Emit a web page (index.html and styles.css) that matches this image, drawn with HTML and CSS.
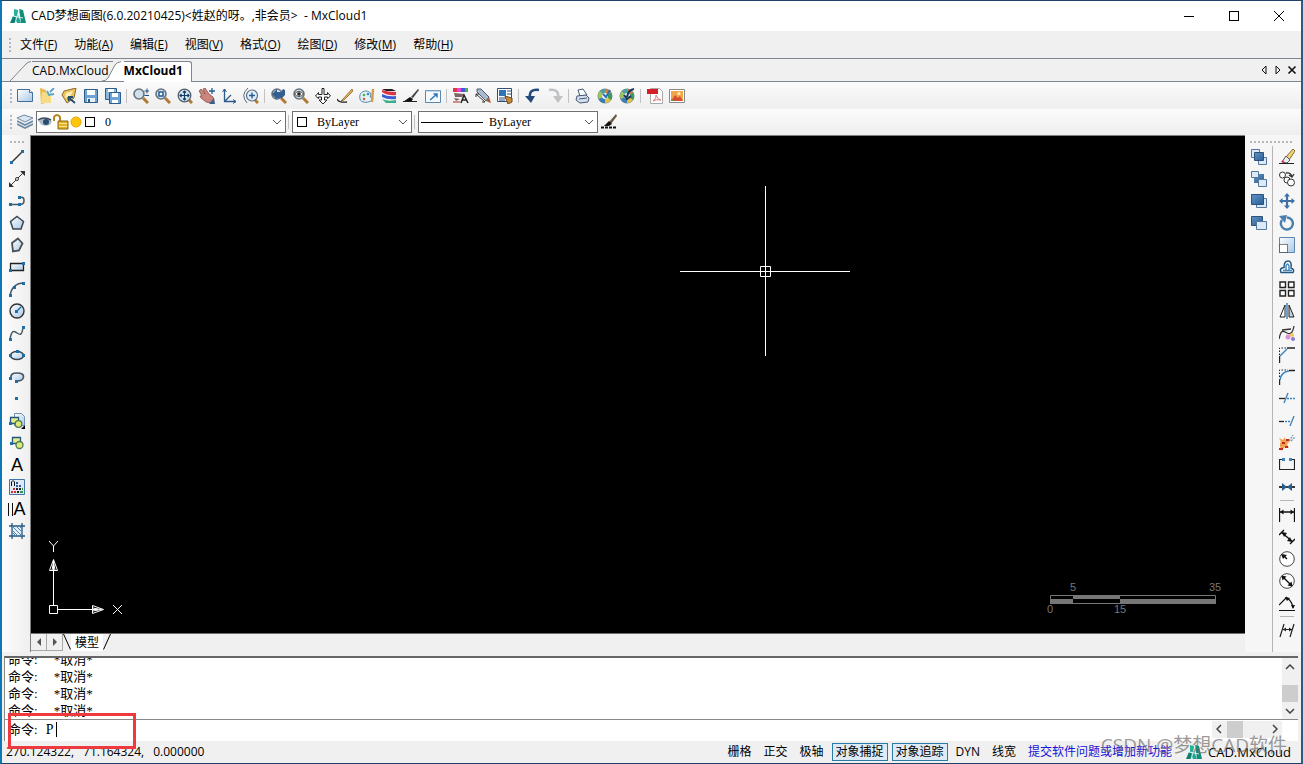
FILE: index.html
```html
<!DOCTYPE html>
<html lang="zh-CN">
<head>
  <meta charset="UTF-8">
  <title>MxCloud1</title>
  <link rel="stylesheet" href="styles.css">
</head>
<body>

<!-- shared icon parts -->
<svg class="defs" width="0" height="0">
  <defs>
    <linearGradient id="sky" x1="0" y1="0" x2="1" y2="1">
      <stop offset="0" stop-color="#ffffff"/>
      <stop offset="1" stop-color="#a9c8e6"/>
    </linearGradient>
    <linearGradient id="steel" x1="0" y1="0" x2="1" y2="1">
      <stop offset="0" stop-color="#5f93c4"/>
      <stop offset="1" stop-color="#2c5f95"/>
    </linearGradient>
    <symbol id="lens" viewBox="0 0 16 16">
      <path d="M10 10l5 5" stroke="#b07a35" stroke-width="3"/>
      <circle cx="6" cy="6" r="5" fill="#cfdfec" stroke="#69737c" stroke-width="1.6"/>
    </symbol>
    <symbol id="logo" viewBox="0 0 16 16">
      <path d="M4 1l4 1v5l-4 2z" fill="#25b39b"/>
      <path d="M9 1l4 1 3 13h-5z" fill="#0e8f7b"/>
      <path d="M3 8l5 2-3 5H0z" fill="#0b7f70"/>
      <path d="M7 4l4 11H7l-2-5z" fill="#1fa894"/>
      <path d="M5 15L9 2M3 8l10 2" stroke="#fff" stroke-width=".8"/>
    </symbol>
    <symbol id="chevron" viewBox="0 0 10 6">
      <path d="M1 1l4 4 4-4" fill="none" stroke="#555"/>
    </symbol>
    <symbol id="wheel" viewBox="0 0 16 16">
      <circle cx="8" cy="8" r="7.5" fill="#6c8794"/>
      <path d="M8 8V1a7 7 0 0 1 6 4z" fill="#d97c3c"/>
      <path d="M8 8l6-3a7 7 0 0 1 0 7z" fill="#3d9a58"/>
      <path d="M8 8l6 4a7 7 0 0 1-6 3z" fill="#e2c23f"/>
      <path d="M8 8v7a7 7 0 0 1-6-4z" fill="#3b7cb8"/>
      <path d="M8 8l-6 3a7 7 0 0 1 1-8z" fill="#9fc45a"/>
      <path d="M8 8L3 3a7 7 0 0 1 5-2z" fill="#4aa3a0"/>
      <circle cx="8" cy="8" r="3" fill="#f4f4f4"/>
    </symbol>
  </defs>
</svg>

<div class="window">

  <header class="titlebar">
    <svg class="icon" viewBox="0 0 16 16"><use href="#logo"/></svg>
    <h1 class="title">CAD梦想画图(6.0.20210425)&lt;姓赵的呀。,非会员&gt;&nbsp; - MxCloud1</h1>
    <div class="window-buttons">
      <button aria-label="最小化"><svg viewBox="0 0 12 12"><path d="M1 5.5h10"/></svg></button>
      <button aria-label="最大化"><svg viewBox="0 0 12 12"><rect x="1.5" y=".5" width="9" height="9"/></svg></button>
      <button aria-label="关闭"><svg viewBox="0 0 12 12"><path d="M1 0l10 10M11 0L1 10"/></svg></button>
    </div>
  </header>

  <nav class="menubar">
    <span class="grip"></span>
    <button>文件(<u>F</u>)</button>
    <button>功能(<u>A</u>)</button>
    <button>编辑(<u>E</u>)</button>
    <button>视图(<u>V</u>)</button>
    <button>格式(<u>O</u>)</button>
    <button>绘图(<u>D</u>)</button>
    <button>修改(<u>M</u>)</button>
    <button>帮助(<u>H</u>)</button>
  </nav>

  <div class="tabs">
    <button class="tab">
      <svg class="tab-slope" viewBox="0 0 22 20"><path d="M0 20L16 3Q18 .5 22 .5V20z"/></svg>
      <span class="tab-label">CAD.MxCloud</span>
    </button>
    <button class="tab active">
      <svg class="tab-slope" viewBox="0 0 22 20"><path d="M0 20Q4 20 6 17L13 4Q15 .5 22 .5V20z"/></svg>
      <span class="tab-label">MxCloud1</span>
    </button>
    <div class="tab-nav">
      <button aria-label="上一个"><svg viewBox="0 0 10 10"><path d="M7 1v8L3 5z"/></svg></button>
      <button aria-label="下一个"><svg viewBox="0 0 10 10"><path d="M3 1v8l4-4z"/></svg></button>
      <button aria-label="关闭标签"><svg viewBox="0 0 10 10"><path d="M1.5 1.5l7 7M8.5 1.5l-7 7" stroke-width="1.6"/></svg></button>
    </div>
  </div>

  <div class="toolbar">
    <span class="grip"></span>
    <button class="tool" aria-label="新建"><svg viewBox="0 0 16 16"><path d="M.5 1.5h12l3 3v9H.5z" fill="url(#sky)" stroke="#3f6f9c"/><path d="M12.5 1.5v3h3" fill="#fff" stroke="#3f6f9c"/></svg></button>
    <button class="tool" aria-label="打开"><svg viewBox="0 0 16 16"><path d="M1 0l6 2v13l-5 1z" fill="#e9b94c"/><path d="M3 4l9 1v10H2z" fill="#f7dc86"/><path d="M15 0l-4 4M8 3l2 4 5-1" stroke="#5ba3cf" stroke-width="1.8" fill="none"/></svg></button>
    <button class="tool" aria-label="打开云图"><svg viewBox="0 0 16 16"><path d="M3 3l12-3-2 10-7 5-5-8z" fill="#efc25a" stroke="#8a6a2b"/><path d="M5 5l7-2-3 6-5 1z" fill="#fff0b8"/><path d="M14 15L7 9M7 9l5 0M7 9l1 4" stroke="#24506f" stroke-width="1.8"/></svg></button>
    <button class="tool" aria-label="保存"><svg viewBox="0 0 16 16"><path d="M1.5 1.5h13v13h-13z" fill="#6fa3d2" stroke="#2d5d8c"/><path d="M4 2h8v5H4z" fill="#fff"/><path d="M4 10h8v4H4z" fill="#e8f0f8"/><path d="M5 11h2v3H5z" fill="#2d5d8c"/></svg></button>
    <button class="tool" aria-label="另存为"><svg viewBox="0 0 16 16"><path d="M.5.5h11v11H.5z" fill="#8db6dc" stroke="#2d5d8c"/><path d="M3 1h6v3H3z" fill="#fff"/><path d="M4.5 4.5h11v11h-11z" fill="#6fa3d2" stroke="#2d5d8c"/><path d="M7 5h6v4H7zM7 12h6v3H7z" fill="#fff"/></svg></button>
    <span class="sep"></span>
    <button class="tool" aria-label="实时缩放"><svg viewBox="0 0 16 16"><use href="#lens"/><path d="M11.500 3h5M14 .5v5M11.500 7.500h5" stroke="#1e4c7c"/></svg></button>
    <button class="tool" aria-label="窗口缩放"><svg viewBox="0 0 16 16"><use href="#lens"/><path d="M4 4h4v4H4z" fill="#fff" stroke="#225c96" stroke-width="1.5"/></svg></button>
    <button class="tool" aria-label="范围缩放"><svg viewBox="0 0 16 16"><path d="M11 11l4 4" stroke="#b07a35" stroke-width="3"/><circle cx="7.5" cy="7.5" r="6.3" fill="#d5e5f3" stroke="#555f69" stroke-width="1.3"/><path d="M7.5 3v9M3 7.5h9M6 4.5L7.500 3 9 4.500M6 10.500l1.500 1.500L9 10.500M4.500 6L3 7.500 4.500 9M10.500 6L12 7.500 10.500 9" stroke="#123e68" fill="none" stroke-width="1.2"/></svg></button>
    <button class="tool" aria-label="平移"><svg viewBox="0 0 16 16"><path d="M0 3l2-2 4 5-2-5 2-1 4 6 4 3 1 3-3 3-5-1-5-4-1-2 2 0z" fill="#c9857b" stroke="#8d5149" stroke-width=".8"/><path d="M10 16l5-6 1 6z" fill="#3b608c"/><path d="M13 0v6M10 3h6" stroke="#225c96" stroke-width="1.3"/></svg></button>
    <button class="tool" aria-label="坐标系"><svg viewBox="0 0 16 16"><path d="M3.5 1v12.500H15M3.500 13.500L10 7" stroke="#2d5d8c" stroke-width="1.3" fill="none"/><path d="M1.500 4l2-3 2 3M12 11.500l3 2-3 2" stroke="#2d5d8c" fill="none"/></svg></button>
    <button class="tool" aria-label="中心缩放"><svg viewBox="0 0 16 16"><path d="M12 12l3 3" stroke="#b07a35" stroke-width="3"/><circle cx="9" cy="7.500" r="5.500" fill="#e2eefa" stroke="#5a6d80" stroke-width="1.2"/><path d="M5 0Q-3 7 4 15" stroke="#5a6d80" fill="none"/><path d="M9 4.500v6M6 7.500h6" stroke="#225c96" stroke-width="1.4"/></svg></button>
    <span class="sep"></span>
    <button class="tool" aria-label="上一视图"><svg viewBox="0 0 16 16"><use href="#lens"/><path d="M1 6l5-5v3h4l2-3 2 1v5l-3 3H6v2z" fill="#345f91"/></svg></button>
    <button class="tool" aria-label="查看"><svg viewBox="0 0 16 16"><use href="#lens"/><path d="M1.500 6Q6 1 10.500 6 6 11 1.500 6z" fill="#fff" stroke="#444"/><circle cx="6" cy="6" r="1.8" fill="#222"/></svg></button>
    <button class="tool" aria-label="移动视图"><svg viewBox="0 0 16 16"><path d="M7 .5h2v6h3.500v-2l3 3.500-3 2.500V9H9.500v3H12l-4 4-4-4h2.500V9H3.500v1.500L.5 8l3-3.500v2H7z" fill="#fff" stroke="#222"/></svg></button>
    <button class="tool" aria-label="画笔"><svg viewBox="0 0 16 16"><path d="M15 1L6 11l-2 2 3-1 9-9z" fill="#e6b25a" stroke="#8b5e23" stroke-width=".8"/><path d="M0 11q2 4 10 3" stroke="#222" fill="none" stroke-width="1.3"/></svg></button>
    <button class="tool" aria-label="颜色"><svg viewBox="0 0 16 16"><path d="M7 3C2 3 0 7 1 11s7 4 11 2c3-2 2-4-1-4 2-3 0-6-4-6z" fill="#e4f0f8" stroke="#5188a8"/><circle cx="5" cy="7" r="1.3" fill="#4ab04a"/><circle cx="9" cy="6" r="1.3" fill="#3c80c8"/><circle cx="5" cy="11" r="1.3" fill="#d2643c"/><path d="M14 1l-1 13" stroke="#d79a45" stroke-width="2.4"/></svg></button>
    <button class="tool" aria-label="图层颜色"><svg viewBox="0 0 16 16"><path d="M1 1h10l4 2H5z" fill="#222"/><path d="M1 2q6 2 14 2v3Q7 8 1 4z" fill="#db3545"/><path d="M1 6q6 3 14 2v3Q7 12 1 9z" fill="#3a5fd0"/><path d="M1 11q6 3 14 1v3H5z" fill="#36b18e"/></svg></button>
    <button class="tool" aria-label="格式刷"><svg viewBox="0 0 16 16"><path d="M15 1L8 9l2 1 6-8z" fill="#444"/><path d="M7 9l3 2-2 3H0z" fill="#111"/><path d="M0 13.500h14" stroke="#222"/></svg></button>
    <button class="tool" aria-label="全屏"><svg viewBox="0 0 16 16"><path d="M.5 2.500h15v12H.5z" fill="#f6fafd" stroke="#5b87ad"/><path d="M.5 2.500h15v1H.5z" fill="#8fb4d3"/><path d="M5 12l7-6M8.500 6H12v3.500" stroke="#2a78b8" stroke-width="1.5" fill="none"/></svg></button>
    <span class="sep"></span>
    <button class="tool" aria-label="文字样式"><svg viewBox="0 0 16 16"><path d="M0 0h4v4H0z" fill="#e0364c"/><path d="M4 0h4v4H4z" fill="#e248d3"/><path d="M8 0h4v4H8z" fill="#4656dc"/><path d="M12 0h3v4h-3z" fill="#45b457"/><path d="M1 5l10 1-2 3-7 0zM1 10l6 1-4 2z" fill="#7b6464"/><path d="M0 14h7" stroke="#c66" stroke-width="1.5"/><path d="M8 15l3-8 4 8M9.500 12h4" stroke="#222" fill="none" stroke-width="1.5"/></svg></button>
    <button class="tool" aria-label="标注样式"><svg viewBox="0 0 16 16"><path d="M2 1l4 0 8 8-3 4-9-9z" fill="#a9bccf" stroke="#4a5b6c"/><path d="M1 6l9 8M1 6v3M1 6h3M10 14H7" stroke="#333" fill="none"/><path d="M11 13l3-4 2 6z" fill="#a85a3a"/></svg></button>
    <button class="tool" aria-label="属性"><svg viewBox="0 0 16 16"><path d="M.5.5h14v13H.500z" fill="#fff" stroke="#2d4f78"/><path d="M2 2h7v6H2z" fill="#2f74b5"/><path d="M10 3h4M10 6h4M2 10h7M2 12h6" stroke="#2d4f78"/><path d="M8 8l7 2v4l-4 2z" fill="#c68a3a" stroke="#6d4a1a"/></svg></button>
    <span class="sep"></span>
    <button class="tool" aria-label="撤销"><svg viewBox="0 0 16 16"><path d="M14 2C7 1 4 4 5 9" stroke="#24497c" stroke-width="2.6" fill="none"/><path d="M0 8h10l-4 7z" fill="#24497c"/></svg></button>
    <button class="tool" aria-label="重做"><svg viewBox="0 0 16 16"><path d="M2 2c7-1 10 2 9 7" stroke="#bfc3c6" stroke-width="2.6" fill="none"/><path d="M16 8H6l5 7z" fill="#bfc3c6"/></svg></button>
    <span class="sep"></span>
    <button class="tool" aria-label="打印"><svg viewBox="0 0 16 16"><path d="M3 2l5-1 4 6-7 1z" fill="#fff" stroke="#46597a"/><path d="M2 8l9-1 3 3-1 4-8 1-4-3z" fill="#d5deeb" stroke="#46597a"/><path d="M4 11l8-1" stroke="#46597a"/></svg></button>
    <button class="tool" aria-label="云图上传"><svg viewBox="0 0 16 16"><use href="#wheel"/><path d="M6 6l3 3 4-7" stroke="#2f72b4" stroke-width="2" fill="none"/></svg></button>
    <button class="tool" aria-label="云图下载"><svg viewBox="0 0 16 16"><use href="#wheel"/><path d="M15 1Q9 2 8 9M5 7l3 4 4-3" stroke="#17375e" stroke-width="2" fill="none"/></svg></button>
    <span class="sep"></span>
    <button class="tool" aria-label="输出PDF"><svg viewBox="0 0 16 16"><path d="M3.500.5h9l3 3v12h-12z" fill="#fff" stroke="#aaa"/><path d="M0 1h11v5H0z" fill="#d51f26"/><path d="M6 13q4-3 3-6 1 4 5 5-5-1-8 1z" stroke="#d98080" fill="none"/></svg></button>
    <button class="tool" aria-label="输出图片"><svg viewBox="0 0 16 16"><path d="M.5 1.500h15v13H.5z" fill="#fff" stroke="#888"/><path d="M2 3h12v10H2z" fill="#f3a54a"/><path d="M2 13l4-6 3 3 2-2 3 5z" fill="#d4502f"/><circle cx="10" cy="5.500" r="1.5" fill="#fff3b0"/><path d="M2 11l3 2H2z" fill="#4b9b4b"/></svg></button>
  </div>

  <div class="toolbar toolbar-props">
    <span class="grip"></span>
    <button class="tool" aria-label="图层"><svg viewBox="0 0 16 16"><path d="M0 4l7-3 9 3-8 4z" fill="#dce6ee" stroke="#6c8ba5"/><path d="M0 7l8 4 8-4M0 10l8 4 8-4" fill="none" stroke="#6c8ba5" stroke-width="1.8"/></svg></button>
    <div class="combo combo-layer">
      <svg viewBox="0 0 16 16"><path d="M1 6q6-4 14 1l-2 4Q5 13 3 9z" fill="#a9bccb"/><path d="M1 6q6-4 13 0" stroke="#3a4b5b" stroke-width="1.5" fill="none"/><circle cx="9" cy="8" r="3" fill="#2b4a6c"/></svg>
      <svg viewBox="0 0 16 16"><path d="M1 7V3q3-4 6 0v4" stroke="#b48a1e" stroke-width="2" fill="none"/><path d="M5 7h10v8H5z" fill="#e3b128" stroke="#8a6812"/><path d="M6 9.500h8M6 12.500h8" stroke="#fbe38a"/></svg>
      <svg viewBox="0 0 16 16"><circle cx="7" cy="8" r="5" fill="#ffc60b" stroke="#eda200"/></svg>
      <i class="swatch"></i>
      <select aria-label="图层"><option>0</option></select>
      <svg class="chevron"><use href="#chevron"/></svg>
    </div>
    <span class="sep"></span>
    <div class="combo combo-color">
      <i class="swatch"></i>
      <select aria-label="颜色"><option>ByLayer</option></select>
      <svg class="chevron"><use href="#chevron"/></svg>
    </div>
    <span class="sep"></span>
    <div class="combo combo-line">
      <i class="line-sample"></i>
      <select aria-label="线型"><option>ByLayer</option></select>
      <svg class="chevron"><use href="#chevron"/></svg>
    </div>
    <button class="tool" aria-label="线型设置"><svg viewBox="0 0 16 16"><path d="M15 0L8 8l2 2 6-8z" fill="#6b5a41"/><path d="M8 7l3 3-3 2-5 0z" fill="#111"/><path d="M0 13.500h16" stroke="#111" stroke-width="2" stroke-dasharray="3 1"/></svg></button>
  </div>

  <main class="workspace">
    <aside class="draw-tools">
      <span class="grip grip-h"></span>
      <button class="tool" aria-label="直线"><svg viewBox="0 0 16 16"><path d="M2 14L14 2" stroke="#333" stroke-width="1.4"/><path d="M1 12h3v3H1zM12 1h3v3h-3z" fill="#1f6ea5"/></svg></button>
      <button class="tool" aria-label="构造线"><svg viewBox="0 0 16 16"><path d="M2 14L14 2" stroke="#333"/><path d="M0 11v5h5zM11 0h5v5z" fill="#333"/><circle cx="8" cy="8" r="1.5" fill="#fff" stroke="#333"/></svg></button>
      <button class="tool" aria-label="多段线"><svg viewBox="0 0 16 16"><path d="M1 11.500h10M11 4.500q4-1 4 3t-4 4" stroke="#4a5966" stroke-width="1.6" fill="none"/><path d="M0 10h3v3H0zM9 10h3v3H9zM9 3h3v3H9z" fill="#1f6ea5"/></svg></button>
      <button class="tool" aria-label="正多边形"><svg viewBox="0 0 16 16"><path d="M8 1.500l6.500 5L12 14H4L1.500 6.500z" fill="url(#sky)" stroke="#3c4650" stroke-width="1.5"/></svg></button>
      <button class="tool" aria-label="多边形"><svg viewBox="0 0 16 16"><path d="M9 1.500l4.500 5L10 13.500 4 14.500 3 6z" fill="url(#sky)" stroke="#4b5056" stroke-width="1.8"/></svg></button>
      <button class="tool" aria-label="矩形"><svg viewBox="0 0 16 16"><path d="M1.500 4.500h13v7h-13z" fill="url(#sky)" stroke="#222" stroke-width="1.3"/><path d="M0 10h3v3H0zM13 3h3v3h-3z" fill="#1f6ea5"/></svg></button>
      <button class="tool" aria-label="圆弧"><svg viewBox="0 0 16 16"><path d="M1 15Q3 2 15 2" stroke="#4a5966" stroke-width="1.6" fill="none"/><path d="M0 13h3v3H0zM4 5h3v3H4zM13 1h3v3h-3z" fill="#1f6ea5"/></svg></button>
      <button class="tool" aria-label="圆"><svg viewBox="0 0 16 16"><circle cx="8" cy="8" r="7" fill="url(#sky)" stroke="#333" stroke-width="1.4"/><path d="M8 8l4-4" stroke="#1f6ea5" stroke-width="1.5"/><path d="M6 7h3v3H6z" fill="#1f6ea5"/></svg></button>
      <button class="tool" aria-label="样条曲线"><svg viewBox="0 0 16 16"><path d="M1 14C3 4 5 6 8 8s5 3 6-6" stroke="#4a5966" stroke-width="1.5" fill="none"/><path d="M0 13h3v3H0zM13 1h3v3h-3z" fill="#1f6ea5"/></svg></button>
      <button class="tool" aria-label="椭圆"><svg viewBox="0 0 16 16"><ellipse cx="8" cy="8.500" rx="6.500" ry="4" fill="url(#sky)" stroke="#3c4650" stroke-width="1.5"/><path d="M0 7h3v3H0zM13 7h3v3h-3zM7 3h3v3H7z" fill="#1f6ea5"/></svg></button>
      <button class="tool" aria-label="椭圆弧"><svg viewBox="0 0 16 16"><path d="M2 9Q1 4 8 4t6.500 4T8 12" fill="url(#sky)" stroke="#4b5763" stroke-width="1.7"/><path d="M0 8h3v3H0zM6 11h3v3H6z" fill="#1f6ea5"/></svg></button>
      <button class="tool" aria-label="点"><svg viewBox="0 0 16 16"><path d="M6 6h3v3H6z" fill="#1f6ea5"/></svg></button>
      <button class="tool" aria-label="插入块"><svg viewBox="0 0 16 16"><path d="M5.500.5h7l3 3v9h-10z" fill="url(#sky)" stroke="#6f93b5"/><path d="M1.500 4.500h8v6h-8z" fill="#e5ee8a" stroke="#24577f" stroke-width="1.3"/><circle cx="9.500" cy="11" r="3.300" fill="#dfe878" stroke="#4a7a52" stroke-width="1.3"/><path d="M0 9h3v3H0z" fill="#1f6ea5"/><path d="M16 12v4h-4z" fill="#000"/></svg></button>
      <button class="tool" aria-label="创建块"><svg viewBox="0 0 16 16"><path d="M3.500 2.500h8v6h-8z" fill="#e5ee8a" stroke="#24577f" stroke-width="1.3"/><circle cx="10.500" cy="10" r="3.500" fill="#dfe878" stroke="#4a7a52" stroke-width="1.3"/><path d="M1 7h3v3H1z" fill="#1f6ea5"/></svg></button>
      <button class="tool tool-letter" aria-label="文字">A</button>
      <button class="tool" aria-label="图案"><svg viewBox="0 0 16 16"><path d="M.5.5h15v15H.5z" fill="#dfeaf6" stroke="#4676a8"/><path d="M2.500 7V3q1.500-3 3 0v4" stroke="#111" fill="none"/><path d="M7 3h2v2H7zM7 6h2v2H7zM10 6h2v2h-2z" fill="#2d58b0"/><path d="M4 9h2v2H4zM2 12h2v2H2zM5 12h2v2H5z" fill="#d22f3d"/><path d="M7 9h2v2H7zM10 9h2v2h-2zM8 12h2v2H8z" fill="#222"/><path d="M11 12h3v2h-3zM13 9h1v2h-1z" fill="#2f9d48"/></svg></button>
      <button class="tool tool-letter tool-mtext" aria-label="多行文字">A</button>
      <button class="tool" aria-label="填充"><svg viewBox="0 0 16 16"><path d="M3 3h10v10H3z" fill="#e3eff9"/><path d="M3 0v16M13 0v16M0 3h16M0 13h16" stroke="#24577f" stroke-width="1.3"/><path d="M3 7l6 6M3 3l10 10M7 3l6 6M4 10l3 3M10 3l3 3" stroke="#4e83b2"/></svg></button>
    </aside>

    <section class="view">
      <div class="canvas">
        <svg class="crosshair" viewBox="0 0 170 170"><path d="M85.500 0v170M0 85.500h170M80.500 80.500h10v10h-10z"/></svg>
        <svg class="ucs" viewBox="0 0 80 80"><path d="M10.500 69V24M15 73.500h40M6.500 69.500h8v8h-8zM6.500 34.500h8l-4-11zM9 34.500l1.500-9 1.500 9M49.500 69.500v8l11-4zM49.500 72l9 1.500-9 1.500M6 5l4.500 5L15 5M10.500 10v6M70 69l9 9M79 69l-9 9"/></svg>
        <svg class="scale" viewBox="0 0 180 40">
          <path d="M8.500 16.500h165v8h-165z" fill="none" stroke="#777"/>
          <path d="M8 20h23v5H8zM31 16h47v4H31zM78 20h96v5H78z" fill="#777"/>
          <text x="31" y="12">5</text>
          <text x="173" y="12">35</text>
          <text x="8" y="34">0</text>
          <text x="78" y="34">15</text>
        </svg>
      </div>
      <div class="layouts">
        <button class="layout-arrow" aria-label="向左"><svg viewBox="0 0 8 8"><path d="M6 0v8L2 4z"/></svg></button>
        <button class="layout-arrow" aria-label="向右"><svg viewBox="0 0 8 8"><path d="M2 0v8l4-4z"/></svg></button>
        <button class="layout-tab">
          <svg viewBox="0 0 8 16"><path d="M.5 0l7 15.500"/></svg>
          <span>模型</span>
          <svg viewBox="0 0 8 16"><path d="M7.500 0l-7 15.500"/></svg>
        </button>
      </div>
    </section>

    <aside class="side-tools">
      <span class="grip grip-h"></span>
      <div class="side-columns">
        <div class="order-tools">
          <button class="tool" aria-label="前置"><svg viewBox="0 0 16 16"><path d="M.5.5h8v8h-8zM7.500 8.500h8v7h-8z" fill="#dce9f6" stroke="#54789c"/><path d="M3.500 3.500h9v8h-9z" fill="url(#steel)" stroke="#2b527a"/></svg></button>
          <button class="tool" aria-label="后置"><svg viewBox="0 0 16 16"><path d="M3 3h10v9H3z" fill="url(#steel)"/><path d="M.5.5h7v6h-7zM7.500 8.500h8v7h-8z" fill="#dce9f6" stroke="#54789c"/></svg></button>
          <button class="tool" aria-label="置于对象之上"><svg viewBox="0 0 16 16"><path d="M5.500 5.500h10v9h-10z" fill="#dce9f6" stroke="#54789c"/><path d="M.5 1.500h12v10H.5z" fill="url(#steel)" stroke="#2b527a"/></svg></button>
          <button class="tool" aria-label="置于对象之下"><svg viewBox="0 0 16 16"><path d="M.5 1.500h11v9H.5z" fill="url(#steel)" stroke="#2b527a"/><path d="M5.500 6.500h10v8h-10z" fill="#dce9f6" stroke="#54789c"/></svg></button>
        </div>
        <div class="modify-tools">
          <button class="tool" aria-label="删除"><svg viewBox="0 0 16 16"><path d="M14 0L7 8l3 3 6-9z" fill="#efd27a" stroke="#8a6828"/><path d="M7 7l4 4-3 3-5-1z" fill="#f0eef2" stroke="#555"/><path d="M2 13l2-2 2 3z" fill="#d36"/><path d="M0 14.500h15" stroke="#222"/></svg></button>
          <button class="tool" aria-label="复制"><svg viewBox="0 0 16 16"><circle cx="3.500" cy="4" r="3" fill="#fff" stroke="#333"/><circle cx="8" cy="9" r="3" fill="#fff" stroke="#333"/><circle cx="12" cy="11.500" r="3.500" fill="#fff" stroke="#333"/><path d="M7 2q5-1 6 4M10 4l3 2 2-3" stroke="#333" stroke-width="1.3" fill="none"/></svg></button>
          <button class="tool" aria-label="移动"><svg viewBox="0 0 16 16"><path d="M8 1v14M1 8h14" stroke="#3f73a6" stroke-width="2.2"/><path d="M8 0l3 3.500H5zM8 16l3-3.500H5zM0 8l3.500-3v6zM16 8l-3.500-3v6z" fill="#3f73a6"/></svg></button>
          <button class="tool" aria-label="旋转"><svg viewBox="0 0 16 16"><path d="M8 2.500A6 6 0 1 1 3 5" stroke="#4a7ead" stroke-width="2.4" fill="none"/><path d="M0 1l8-1-2 8z" fill="#4a7ead"/></svg></button>
          <button class="tool" aria-label="缩放"><svg viewBox="0 0 16 16"><path d="M.5.5h15v15H.5z" fill="url(#sky)" stroke="#5e87ae"/><path d="M.5 7.500h8v8h-8z" fill="#fff" stroke="#111" stroke-dasharray="1 1"/></svg></button>
          <button class="tool" aria-label="偏移"><svg viewBox="0 0 16 16"><path d="M2 13.500h12q2-3-2-4.500Q13 2 9 2T5 8.500Q0 9 2 13.500z" fill="#fff" stroke="#24577f" stroke-width="1.5"/><path d="M4 11.500h9M7 11V7q2-4 3 0v4" stroke="#3f86c0" stroke-width="1.4" fill="none"/></svg></button>
          <button class="tool" aria-label="阵列"><svg viewBox="0 0 16 16"><path d="M1 1h5.500v5.500H1zM9.500 1H15v5.500H9.500zM1 9.500h5.500V15H1zM9.500 9.500H15V15H9.500z" fill="#fff" stroke="#222" stroke-width="1.4"/></svg></button>
          <button class="tool" aria-label="镜像"><svg viewBox="0 0 16 16"><path d="M6 2v12H1z" fill="#fff" stroke="#222"/><path d="M10 2v12h5z" fill="#bcd3e8" stroke="#222"/><path d="M8 0v16" stroke="#3a7db5" stroke-width="1.4"/></svg></button>
          <button class="tool" aria-label="编辑样条"><svg viewBox="0 0 16 16"><path d="M0 14C2 4 4 6 8 8s6-1 7-7M3 5l9-1" stroke="#333" stroke-width="1.3" fill="none"/><circle cx="9" cy="12" r="2.500" fill="#d98fe0"/><circle cx="13" cy="10" r="2" fill="#f2c453"/><circle cx="14" cy="14" r="2" fill="#8a78d8"/></svg></button>
          <button class="tool" aria-label="倒角"><svg viewBox="0 0 16 16"><path d="M.5 16V9M8 1h8" stroke="#222" stroke-width="1.4"/><path d="M1 9l7-7" stroke="#3a86c4" stroke-width="1.5"/><path d="M.5 8V1H8" stroke="#222" stroke-dasharray="1.500 1.500" fill="none"/></svg></button>
          <button class="tool" aria-label="圆角"><svg viewBox="0 0 16 16"><path d="M.5 16v-6M10 1.500h6" stroke="#222" stroke-width="1.4"/><path d="M1 11Q2 3 10 2" stroke="#3a86c4" stroke-width="1.7" fill="none"/><path d="M.5 8V1H9" stroke="#222" stroke-dasharray="1.500 1.500" fill="none"/></svg></button>
          <button class="tool" aria-label="修剪"><svg viewBox="0 0 16 16"><path d="M0 7.500h6" stroke="#222" stroke-width="1.3"/><path d="M8 7.500h8" stroke="#3a86c4" stroke-width="1.3" stroke-dasharray="2 1"/><path d="M9 2L5 12" stroke="#3f7fb5" stroke-width="1.3"/></svg></button>
          <button class="tool" aria-label="延伸"><svg viewBox="0 0 16 16"><path d="M0 8.500h5" stroke="#222" stroke-width="1.3"/><path d="M6 8.500h6" stroke="#3a86c4" stroke-width="1.3" stroke-dasharray="2 1"/><path d="M15 3l-4 10" stroke="#3f7fb5" stroke-width="1.3"/></svg></button>
          <button class="tool" aria-label="分解"><svg viewBox="0 0 16 16"><path d="M0 3l4 2 2-3 1 4 4 0-3 3 2 4-4-1-4 4-1-5 0-3 1-1z" fill="#f0a24c"/><path d="M0 14h4M7 5h3M3 8h3M6 12h3" stroke="#c02a1c" stroke-width="2.2"/><path d="M10 6l4-6M12 6l4-4" stroke="#6c95bb" stroke-width="1.3" stroke-dasharray="2 1"/></svg></button>
          <button class="tool" aria-label="打断"><svg viewBox="0 0 16 16"><path d="M4 2.500H.5v10h15v-10H12" stroke="#222" fill="none" stroke-width="1.2"/><path d="M3 1h3v3H3zM10 1h3v3h-3z" fill="#3a86c4"/></svg></button>
          <button class="tool" aria-label="合并"><svg viewBox="0 0 16 16"><path d="M0 8h16" stroke="#222" stroke-width="1.8"/><path d="M3 4l5 4-5 4zM13 4L8 8l5 4z" fill="#2d5f8c"/></svg></button>
          <span class="sep-h"></span>
          <button class="tool" aria-label="线性标注"><svg viewBox="0 0 16 16"><path d="M.5 1v14M15.500 1v14M1 5h14" stroke="#111" stroke-width="1.3"/><path d="M1 5l3.500-2.500v5zM15 5l-3.500-2.500v5z" fill="#111"/></svg></button>
          <button class="tool" aria-label="对齐标注"><svg viewBox="0 0 16 16"><path d="M0 6l5-5M11 15l5-5M3 4l10 8" stroke="#111" stroke-width="1.4"/><path d="M3 3l5 1-3 4zM13 13l-5-1 3-4z" fill="#111"/></svg></button>
          <button class="tool" aria-label="半径标注"><svg viewBox="0 0 16 16"><circle cx="8" cy="8" r="7.300" fill="#fff" stroke="#444"/><path d="M8 8L4 4" stroke="#111" stroke-width="1.4"/><path d="M2 3l6 1-4 4z" fill="#111"/></svg></button>
          <button class="tool" aria-label="直径标注"><svg viewBox="0 0 16 16"><circle cx="8" cy="8" r="7.300" fill="#fff" stroke="#444"/><path d="M4 4l8 8" stroke="#111" stroke-width="1.4"/><path d="M2.500 2.500l5 1-4 4zM13.500 13.500l-5-1 4-4z" fill="#111"/></svg></button>
          <button class="tool" aria-label="角度标注"><svg viewBox="0 0 16 16"><path d="M0 15.500h16M0 10l8-8M8 3q5 3 6 10" stroke="#111" stroke-width="1.2" fill="none"/><path d="M6 2l5 1-3 3zM12 10h4l-2 4z" fill="#111"/></svg></button>
          <span class="sep-h"></span>
          <button class="tool" aria-label="倾斜标注"><svg viewBox="0 0 16 16"><path d="M1 14L5 1M11 14l4-13M4 6.500h9" stroke="#222" stroke-width="1.2"/><path d="M4 6.500l3-2v4zM13 6.500l-3-2v4z" fill="#222"/></svg></button>
        </div>
      </div>
    </aside>
  </main>

  <section class="command">
    <div class="log-row">
      <div class="log">
        <p><span>命令:</span><span>*取消*</span></p>
        <p><span>命令:</span><span>*取消*</span></p>
        <p><span>命令:</span><span>*取消*</span></p>
        <p><span>命令:</span><span>*取消*</span></p>
      </div>
      <div class="scroll-v">
        <svg viewBox="0 0 10 6"><path d="M1 5l4-4 4 4"/></svg>
        <i class="thumb"></i>
        <svg viewBox="0 0 10 6"><path d="M1 1l4 4 4-4"/></svg>
      </div>
    </div>
    <div class="prompt">
      <label for="cmd">命令:</label>
      <input id="cmd" type="text" value="P">
      <span class="caret"></span>
      <div class="scroll-h">
        <svg viewBox="0 0 6 10"><path d="M5 1L1 5l4 4"/></svg>
        <i class="thumb"></i>
        <svg viewBox="0 0 6 10"><path d="M1 1l4 4-4 4"/></svg>
      </div>
    </div>
    <div class="highlight"></div>
  </section>

  <footer class="statusbar">
    <div class="coords"><span>270.124322,</span><span>71.164324,</span><span>0.000000</span></div>
    <button>栅格</button>
    <button>正交</button>
    <button>极轴</button>
    <button class="on">对象捕捉</button>
    <button class="on">对象追踪</button>
    <button>DYN</button>
    <button>线宽</button>
    <a href="#">提交软件问题或增加新功能</a>
    <span class="brand"><svg class="icon" viewBox="0 0 16 16"><use href="#logo"/></svg>CAD.MxCloud</span>
    <span class="watermark">CSDN @梦想CAD软件</span>
  </footer>

</div>

</body>
</html>
```
FILE: styles.css
```css
* {
  box-sizing: border-box;
  margin: 0;
  padding: 0;
}

body {
  background: #f0f0f0;
  color: #000;
  font: 12px/18px "Open Sans", "Noto Sans CJK SC", sans-serif;
}

button,
input,
select {
  font: inherit;
  color: inherit;
  border: 0;
  background: none;
}

.defs {
  position: absolute;
}

.icon {
  width: 16px;
  height: 16px;
}

.window {
  display: flex;
  flex-direction: column;
  height: 100vh;
  border: 1px solid #1d4468;
  border-left: 2px solid #0d78b5;
  border-right: 2px solid #2b5b88;
}

/* title */
.titlebar {
  display: flex;
  align-items: center;
  height: 30px;
  padding-left: 8px;
  gap: 5px;
  background: #fff;
}

.title {
  flex: 1;
  font-size: 12px;
  font-weight: normal;
}

.window-buttons {
  display: flex;
}

.window-buttons button {
  width: 45px;
  height: 30px;
}

.window-buttons svg {
  width: 12px;
  height: 12px;
  fill: none;
  stroke: #000;
  vertical-align: middle;
}

/* menu */
.menubar {
  display: flex;
  align-items: center;
  gap: 1px;
  height: 28px;
  padding-left: 7px;
  border-bottom: 1px solid #7d868e;
}

.menubar button {
  padding: 0 8px;
}

.grip {
  width: 2px;
  height: 14px;
  background: repeating-linear-gradient(#b4b8bb 0 2px, transparent 2px 4px);
}

.grip-h {
  width: auto;
  height: 2px;
  background: repeating-linear-gradient(90deg, #b4b8bb 0 2px, transparent 2px 4px);
}

/* document tabs */
.tabs {
  display: flex;
  align-items: flex-end;
  height: 23px;
  padding: 0 1px 0 8px;
  border-bottom: 1px solid #7d868e;
}

.tab {
  display: flex;
  height: 20px;
}

.tab-slope {
  width: 22px;
  height: 20px;
  fill: #f0f0f0;
  stroke: #7d868e;
}

/* only the slope is stroked, not the sides of the shape */
.tab-slope path {
  stroke-dasharray: 29 100;
}

.tab-label {
  height: 20px;
  padding-right: 4px;
  border-top: 1px solid #7d868e;
  background: #f0f0f0;
}

.tab.active {
  z-index: 1;
  height: 21px;
  margin: 0 0 -1px -11px;
  font-weight: bold;
}

.tab.active .tab-slope {
  fill: #fff;
}

.tab.active .tab-label {
  height: 21px;
  padding-right: 8px;
  border-right: 1px solid #7d868e;
  border-radius: 0 3px 0 0;
  background: #fff;
}

.tab-nav {
  display: flex;
  align-self: center;
  gap: 4px;
  margin-left: auto;
  padding-right: 3px;
}

.tab-nav svg {
  display: block;
  width: 10px;
  height: 10px;
  fill: none;
  stroke: #111;
}

/* toolbars */
.toolbar {
  display: flex;
  align-items: center;
  height: 27px;
  padding-left: 8px;
  background: linear-gradient(#fbfbfb, #eeeeee);
}

.toolbar .grip {
  margin-right: 2px;
}

.toolbar-props {
  height: 26px;
}

.tool {
  flex: none;
  display: flex;
  align-items: center;
  justify-content: center;
  width: 22px;
  height: 22px;
}

.tool svg {
  width: 16px;
  height: 16px;
  fill: none;
}

.tool-letter {
  font: 18px/22px "Liberation Sans", sans-serif;
}

.tool-mtext::before {
  content: "";
  flex: none;
  width: 3px;
  height: 13px;
  border: solid #111;
  border-width: 0 1px;
}

.sep {
  flex: none;
  width: 6px;
  height: 14px;
  background: linear-gradient(90deg, transparent 2px, #c2c2c2 2px 3px, transparent 3px);
}

.sep-h {
  width: 14px;
  height: 6px;
  background: linear-gradient(transparent 2px, #b5b5b5 2px 3px, transparent 3px);
}

.combo {
  display: flex;
  align-items: center;
  height: 22px;
  border: 1px solid #707070;
  background: #fff;
}

.combo svg {
  flex: none;
  width: 16px;
  height: 16px;
}

.combo .chevron {
  width: 10px;
  height: 6px;
  margin-right: 3px;
}

.combo select {
  flex: 1;
  min-width: 0;
  padding-left: 10px;
  appearance: none;
  font: 12px/16px "Liberation Serif", serif;
}

.combo-layer {
  width: 250px;
}

.combo-color {
  width: 120px;
  padding-left: 4px;
}

.combo-line {
  width: 180px;
  padding-left: 2px;
}

.combo-line select {
  padding-left: 6px;
}

.swatch {
  flex: none;
  width: 10px;
  height: 10px;
  border: 1px solid #000;
}

.line-sample {
  width: 62px;
  height: 1px;
  background: #000;
}

/* drawing area */
.workspace {
  flex: 1;
  display: flex;
  min-height: 0;
  overflow: hidden;
}

.draw-tools {
  display: flex;
  flex-direction: column;
  align-items: center;
  width: 28px;
  padding: 6px 0 0 2px;
  background: linear-gradient(90deg, #fcfcfc, #efefef);
}

.draw-tools .grip-h {
  width: 14px;
  margin-bottom: 3px;
}

.view {
  flex: 1;
  display: flex;
  flex-direction: column;
  border: solid #808080;
  border-width: 1px 0 0 1px;
}

.canvas {
  position: relative;
  flex: 1;
  overflow: hidden;
  background: #000;
}

.canvas svg {
  position: absolute;
  fill: none;
  stroke: #fff;
}

.crosshair {
  left: 649px;
  top: 50px;
  width: 170px;
  height: 170px;
}

.ucs {
  left: 12px;
  bottom: 17px;
  width: 80px;
  height: 80px;
}

.canvas .scale {
  right: 23px;
  bottom: 14px;
  width: 180px;
  height: 40px;
  stroke: none;
}

.scale text {
  fill: #777;
  font: 11px "Liberation Sans", sans-serif;
  text-anchor: middle;
}

.layouts {
  display: flex;
  height: 19px;
  border-top: 1px solid #707070;
}

.layout-arrow {
  width: 16px;
  height: 17px;
  border: solid #a8a8a8;
  border-width: 0 1px 1px 0;
}

.layout-arrow svg {
  display: block;
  width: 8px;
  height: 8px;
  margin: 0 auto;
  fill: #555;
}

.layout-tab {
  display: flex;
  height: 17px;
}

.layout-tab span {
  padding: 0 4px;
  line-height: 17px;
  background: #fff;
}

.layout-tab svg {
  width: 8px;
  height: 16px;
  fill: none;
  stroke: #000;
}

.side-tools {
  width: 56px;
  padding-top: 6px;
  background: #f6f6f6;
}

.side-tools .grip-h {
  display: block;
  margin: 0 7px 3px 5px;
}

.side-columns {
  display: flex;
  height: 100%;
}

.order-tools {
  width: 28px;
  padding-left: 3px;
  border-right: 1px solid #b5b5b5;
}

.modify-tools {
  display: flex;
  flex-direction: column;
  align-items: center;
  width: 28px;
}

/* command line */
.command {
  position: relative;
  margin: 4px 3px 0 2px;
  border: 1px solid #8a8a8a;
  border-width: 2px 0 0 1px;
  border-top-color: #666;
  background: #fff;
  font: 13px/17px "Liberation Serif", "Noto Sans CJK SC", serif;
}

.log-row {
  display: flex;
  height: 61px;
}

.log {
  flex: 1;
  display: flex;
  flex-direction: column;
  justify-content: flex-end;
  overflow: hidden;
  padding-left: 3px;
}

.log p {
  flex: none;
  display: flex;
  gap: 16px;
}

.scroll-v,
.scroll-h {
  display: flex;
  align-items: center;
  justify-content: space-between;
  background: #f0f0f0;
}

.scroll-v {
  flex-direction: column;
  width: 16px;
  padding: 6px 0 5px;
}

.scroll-v svg {
  width: 10px;
  height: 6px;
}

.scroll-v svg,
.scroll-h svg {
  fill: none;
  stroke: #444;
  stroke-width: 1.5px;
}

.thumb {
  width: 16px;
  height: 17px;
  background: #cdcdcd;
}

.scroll-v .thumb {
  margin-top: 8px;
}

.prompt {
  display: flex;
  align-items: center;
  height: 22px;
  padding: 0 0 3px 3px;
  border-top: 1px solid #8a8a8a;
}

.prompt input {
  width: 10px;
  margin-left: 8px;
  outline: none;
  font-size: 14px;
}

.caret {
  width: 1px;
  height: 15px;
  background: #000;
}

.scroll-h {
  width: 70px;
  height: 17px;
  margin: 0 16px 0 auto;
  padding: 0 4px;
}

.scroll-h svg {
  width: 6px;
  height: 10px;
}

.scroll-h .thumb {
  margin-right: 24px;
}

.highlight {
  position: absolute;
  left: 3px;
  top: 55px;
  width: 128px;
  height: 36px;
  border: 3px solid #ee3a3e;
  z-index: 2;
}

/* status bar */
.statusbar {
  position: relative;
  display: flex;
  align-items: center;
  gap: 4px;
  height: 22px;
  padding: 0 10px 0 4px;
}

.coords {
  display: flex;
  gap: 9px;
  margin-right: auto;
}

.statusbar button,
.statusbar a {
  padding: 0 3px;
  border: 1px solid transparent;
  line-height: 16px;
  white-space: nowrap;
}

.statusbar .on {
  border-color: #2a7ba8;
  background: #dcebf5;
}

.statusbar a {
  color: #1a12d8;
  text-decoration: none;
}

.brand {
  display: flex;
  align-items: center;
  gap: 6px;
  margin-left: 6px;
  font-size: 13px;
}

.watermark {
  position: absolute;
  right: 14px;
  bottom: 8px;
  color: rgba(110, 110, 110, .7);
  font-size: 19px;
  line-height: 20px;
  white-space: nowrap;
}
```
